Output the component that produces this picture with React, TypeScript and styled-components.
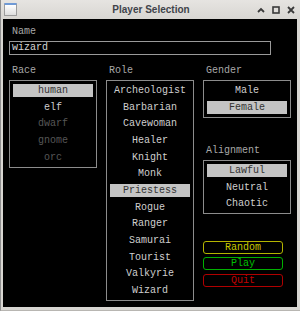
import styled, { createGlobalStyle } from 'styled-components';

const GlobalStyle = createGlobalStyle`
  html, body {
    margin: 0;
    padding: 0;
    background: #ffffff;
  }
`;

const Window = styled.div`
  width: 300px;
  height: 311px;
  box-sizing: border-box;
  display: flex;
  flex-direction: column;
  background: #d8d6d2;
  border-left: 1px solid #8e8e8e;
  border-bottom: 1px solid #b8b6b2;
`;

const TitleBar = styled.div`
  height: 19px;
  flex: none;
  display: flex;
  align-items: center;
  padding: 0 5px 0 3px;
  background: linear-gradient(#e6e4e1, #d8d6d2);
  font-family: 'Liberation Sans', Arial, sans-serif;
`;

const AppIcon = styled.div`
  width: 11px;
  height: 10px;
  border: 1px solid #9c9c9c;
  border-top: 2px solid #6f9ad6;
  background: linear-gradient(#ffffff, #dedede);
  border-radius: 1px;
`;

const Title = styled.div`
  flex: 1;
  text-align: center;
  font-size: 10px;
  font-weight: bold;
  color: #40434a;
  padding-left: 28px;
`;

const Controls = styled.div`
  display: flex;
  align-items: center;
  gap: 7px;
`;

const Content = styled.div`
  flex: 1;
  margin: 0 3px 3px 2px;
  background: #000000;
  padding: 6px 0 0 6px;
  font-family: 'Liberation Mono', 'DejaVu Sans Mono', monospace;
  font-size: 10px;
  color: #cfcfcf;
`;

const Label = styled.div`
  height: 14px;
  line-height: 14px;
  padding-left: 3px;
  margin-bottom: 2px;
  color: #a8a8a8;
`;

const NameInput = styled.div`
  width: 262px;
  height: 14px;
  box-sizing: border-box;
  border: 1px solid #9a9a9a;
  padding-left: 2px;
  line-height: 12px;
  color: #d4d4d4;
`;

const Columns = styled.div`
  display: grid;
  grid-template-columns: 88px 88px 88px;
  column-gap: 9px;
  margin-top: 9px;
`;

const Column = styled.div`
  display: flex;
  flex-direction: column;
`;

const ListBox = styled.div`
  border: 1px solid #8c8c8c;
  padding: 3px;
  display: flex;
  flex-direction: column;
  gap: 3.67px;
`;

const Item = styled.div<{ $selected?: boolean; $disabled?: boolean }>`
  height: 13px;
  line-height: 13px;
  text-align: center;
  background: ${(p) => (p.$selected ? '#c4c4c4' : 'transparent')};
  color: ${(p) => (p.$selected ? '#333333' : p.$disabled ? '#565656' : '#cfcfcf')};
`;

const Spaced = styled.div<{ $top: number }>`
  margin-top: ${(p) => p.$top}px;
  display: flex;
  flex-direction: column;
`;

const Buttons = styled.div`
  margin-top: 26.7px;
  display: flex;
  flex-direction: column;
  gap: 3.5px;
`;

const Button = styled.div<{ $color: string; $text: string }>`
  width: 80px;
  height: 13px;
  box-sizing: border-box;
  border: 1px solid ${(p) => p.$color};
  border-radius: 3px;
  line-height: 11px;
  text-align: center;
  color: ${(p) => p.$text};
`;

type Entry = { name: string; selected?: boolean; disabled?: boolean };

const races: Entry[] = [
  { name: 'human', selected: true },
  { name: 'elf' },
  { name: 'dwarf', disabled: true },
  { name: 'gnome', disabled: true },
  { name: 'orc', disabled: true },
];

const roles: Entry[] = [
  'Archeologist',
  'Barbarian',
  'Cavewoman',
  'Healer',
  'Knight',
  'Monk',
  'Priestess',
  'Rogue',
  'Ranger',
  'Samurai',
  'Tourist',
  'Valkyrie',
  'Wizard',
].map((name) => ({ name, selected: name === 'Priestess' }));

const genders: Entry[] = [{ name: 'Male' }, { name: 'Female', selected: true }];

const alignments: Entry[] = [{ name: 'Lawful', selected: true }, { name: 'Neutral' }, { name: 'Chaotic' }];

const List = ({ items }: { items: Entry[] }) => (
  <ListBox>
    {items.map((item) => (
      <Item key={item.name} $selected={item.selected} $disabled={item.disabled}>
        {item.name}
      </Item>
    ))}
  </ListBox>
);

const App = () => {
  return (
    <>
      <GlobalStyle />
      <Window>
        <TitleBar>
          <AppIcon />
          <Title>Player Selection</Title>
          <Controls>
            <svg width="8" height="8" viewBox="0 0 8 8">
              <path d="M1 6 L4 3 L7 6" fill="none" stroke="#3a3a3a" strokeWidth="1.8" />
            </svg>
            <svg width="8" height="8" viewBox="0 0 8 8">
              <rect x="1" y="1" width="6" height="6" fill="none" stroke="#3a3a3a" strokeWidth="1.6" />
            </svg>
            <svg width="8" height="8" viewBox="0 0 8 8">
              <path d="M1 1 L7 7 M7 1 L1 7" fill="none" stroke="#3a3a3a" strokeWidth="1.8" />
            </svg>
          </Controls>
        </TitleBar>
        <Content>
          <Label>Name</Label>
          <NameInput>wizard</NameInput>
          <Columns>
            <Column>
              <Label>Race</Label>
              <List items={races} />
            </Column>
            <Column>
              <Label>Role</Label>
              <List items={roles} />
            </Column>
            <Column>
              <Label>Gender</Label>
              <List items={genders} />
              <Spaced $top={26.3}>
                <Label>Alignment</Label>
                <List items={alignments} />
              </Spaced>
              <Buttons>
                <Button $color="#b4b400" $text="#c8c800">Random</Button>
                <Button $color="#00b000" $text="#00c000">Play</Button>
                <Button $color="#b00000" $text="#c00000">Quit</Button>
              </Buttons>
            </Column>
          </Columns>
        </Content>
      </Window>
    </>
  );
};

export default App;
